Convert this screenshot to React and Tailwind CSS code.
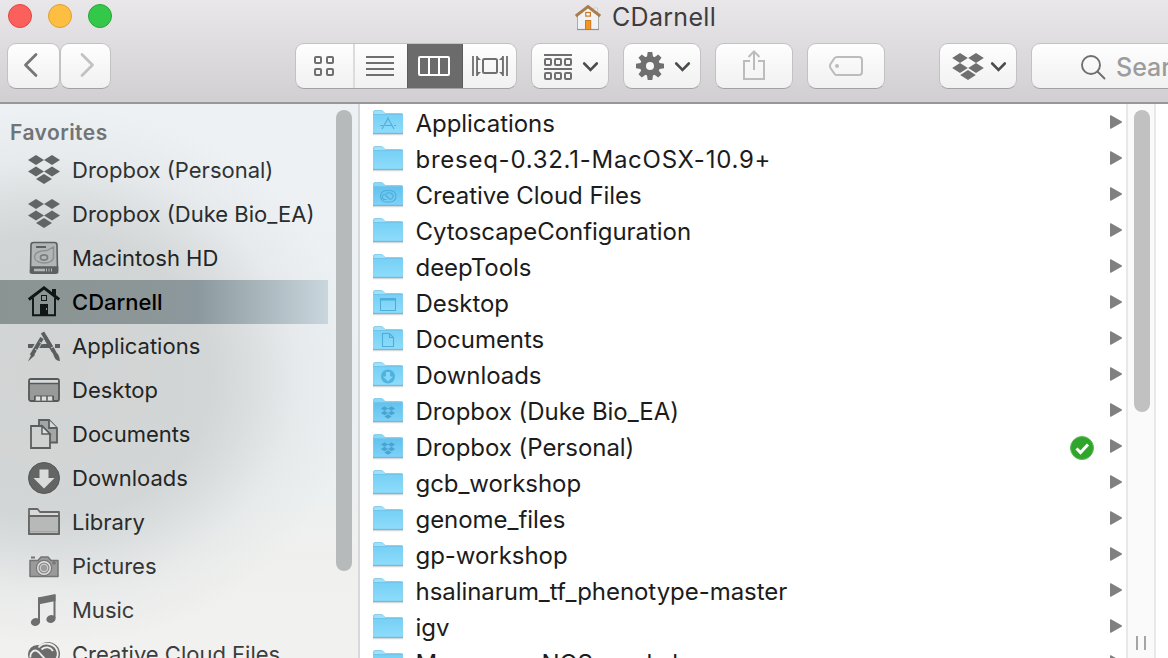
import React from "react";

const box =
  "h-[46px] shrink-0 rounded-[9px] border border-[#c3c1c4] border-b-[#a3a1a4] bg-gradient-to-b from-[#fefefe] to-[#f1f1f1] overflow-hidden";

const Diamonds = ({ pts, w = 8, h = 5 }) =>
  pts.map(([x, y], i) => (
    <path key={i} d={`M${x - w} ${y}L${x} ${y - h}L${x + w} ${y}L${x} ${y + h}Z`} />
  ));

const Chevron = () => (
  <path d="M52.200 19.500l6.300 6.300l6.300-6.300" fill="none" stroke="#4c4c4c" strokeWidth="2.600" strokeLinecap="round" />
);

function ToolButton({ width = "w-[78px]", margin = "ml-[14px]", children }) {
  return (
    <button className={`${box} ${width} ${margin} block`}>
      <svg width="76" height="44" className="block">{children}</svg>
    </button>
  );
}

function HomeEmblem() {
  return (
    <svg width="28" height="30" className="shrink-0">
      <path d="M18.500 6h4v7l-4-3z" fill="#eee" stroke="#c8c8c8" strokeWidth=".8" />
      <path d="M2.500 13L13 4.500l10.500 8.500v14.500H2.500z" fill="#f1f2f3" stroke="#a9abad" strokeWidth="1" />
      <path d="M2 27.500h22" stroke="#8f9092" strokeWidth="1.200" />
      <path d="M.8 14L13 4.500l12.200 9.500" fill="none" stroke="#a87d4b" strokeWidth="2.900" />
      <rect x="10.800" y="10.500" width="4.600" height="3.600" fill="#fff" stroke="#c8792c" strokeWidth="1.200" />
      <rect x="10.500" y="18.500" width="5.200" height="9" fill="#f79420" stroke="#c97a25" />
    </svg>
  );
}

function Toolbar() {
  const g = "#6f6f6f";
  return (
    <header className="h-[104px] shrink-0 border-b-2 border-[#99979a] bg-gradient-to-b from-[#e9e7ea] to-[#d1cfd2] overflow-hidden">
      <div className="grid h-[34px] w-[1168px] grid-cols-[575px_1fr]">
        <div className="flex items-center gap-4 pl-2 pb-0.5">
          <i className="h-6 w-6 rounded-full border border-[#e24640] bg-[#fc605c]" />
          <i className="h-6 w-6 rounded-full border border-[#dfa033] bg-[#fdbe41]" />
          <i className="h-6 w-6 rounded-full border border-[#27a53a] bg-[#34c84a]" />
        </div>
        <div className="flex items-center">
          <HomeEmblem />
          <h1 className="ml-[9px] text-[25px] leading-[34px] font-normal tracking-[0.3px] text-[#3e3c3f]">CDarnell</h1>
        </div>
      </div>
      <div className="flex w-[1240px] pt-[9px] pl-[7px]">
        <ToolButton width="w-[53px]" margin="ml-0">
          <path d="M28 10.500L17.500 21L28 31.500" fill="none" stroke="#767676" strokeWidth="2.800" strokeLinecap="round" strokeLinejoin="round" />
        </ToolButton>
        <ToolButton width="w-[51px]" margin="ml-0">
          <path d="M21 10.500L31.500 21L21 31.500" fill="none" stroke="#c2c2c2" strokeWidth="2.800" strokeLinecap="round" strokeLinejoin="round" />
        </ToolButton>
        <div className={`${box} ml-[184px] flex w-[222px]`}>
          <button className="w-[59px] border-r-2 border-[#dcdcdc]">
            <svg width="57" height="44" fill="none" stroke={g} strokeWidth="2">
              {[[19, 13], [31, 13], [19, 25], [31, 25]].map(([x, y]) => (
                <rect key={`${x}-${y}`} x={x} y={y} width="6" height="6" rx="1" />
              ))}
            </svg>
          </button>
          <button className="w-[52px]">
            <svg width="52" height="44" fill={g}>
              {[12, 18, 24, 30].map((y) => <rect key={y} x="11" y={y} width="28" height="2" />)}
            </svg>
          </button>
          <button className="w-[56px] bg-[#6b6b6b] border-x border-[#5c5c5c]">
            <svg width="54" height="44" fill="none" stroke="#fff" strokeWidth="2">
              <rect x="11" y="13" width="30" height="18" rx="1" />
              <path d="M21 13v18M31 13v18" />
            </svg>
          </button>
          <button className="w-[53px]">
            <svg width="53" height="44" fill="none" stroke={g} strokeWidth="2">
              <rect x="20" y="15" width="14" height="14" rx="1.500" />
              <path d="M10 12v20M14 12v20M40 12v20M44 12v20" strokeWidth="1.800" />
              <path d="M14 12l4 4h-3v12h3l-4 4zM40 12l-4 4h3v12h-3l4 4z" fill={g} stroke="none" />
            </svg>
          </button>
        </div>
        <ToolButton>
          <g fill="none" stroke={g} strokeWidth="2">
            <path d="M12 11h28M12 25h28" />
            {[13, 23, 33].map((x) => (
              <g key={x}>
                <rect x={x} y="15" width="6" height="6" rx="1" />
                <rect x={x} y="29" width="6" height="6" rx="1" />
              </g>
            ))}
          </g>
          <Chevron />
        </ToolButton>
        <ToolButton>
          <g transform="translate(26 22)">
            <circle r="7" fill="none" stroke={g} strokeWidth="6" />
            {[0, 45, 90, 135, 180, 225, 270, 315].map((a) => (
              <path key={a} transform={`rotate(${a})`} d="M-3.200 -8L-2.300 -14H2.300L3.200 -8z" fill={g} />
            ))}
          </g>
          <Chevron />
        </ToolButton>
        <ToolButton>
          <path d="M34 17h-6v18h20V17h-6M38 26V8M32.500 13L38 7.500L43.500 13" fill="none" stroke="#bcbcbc" strokeWidth="2" />
        </ToolButton>
        <ToolButton>
          <path d="M29 13H51q3 0 3 3V28q0 3-3 3H29q-1.500 0-2.500-1.200L22.500 24q-1.200-2 0-4L26.500 14.200Q27.500 13 29 13z" fill="none" stroke="#bcbcbc" strokeWidth="2" />
          <circle cx="29" cy="22" r="2" fill="#bcbcbc" />
        </ToolButton>
        <ToolButton margin="ml-[54px]">
          <g fill={g}><Diamonds w={7.800} h={5} pts={[[20, 14], [36, 14], [20, 24], [36, 24], [28, 31]]} /></g>
          <Chevron />
        </ToolButton>
        <div className={`${box} ml-[14px] flex w-[190px] items-center pl-[48px]`}>
          <svg width="28" height="44" className="shrink-0" fill="none" stroke="#6f6f6f" strokeWidth="1.900">
            <circle cx="11" cy="21" r="9" /><path d="M17.500 27.500l7 7" strokeLinecap="round" />
          </svg>
          <span className="ml-[8px] pt-[3px] text-[25px] font-medium text-[#9c9c9c]">Search</span>
        </div>
      </div>
    </header>
  );
}

const boxPts = [[10, 12], [26, 12], [10, 23.500], [26, 23.500], [18, 31]];

const sideIcons = {
  dropbox: <g fill="#626566"><Diamonds pts={boxPts} /></g>,
  disk: (
    <g fill="none" stroke="#5d6060" strokeWidth="1.600">
      <path d="M7.500 6.500h21q2.500 0 2.500 2.500l.500 25.500q0 2.700-2 2.700h-23q-2 0-2-2.700L5 9Q5 6.500 7.500 6.500z" fill="#b3b6b6" />
      <path d="M5 31h26.500v5.500h-27z" fill="#5d6060" />
      <path d="M8 34h11" stroke="#b3b6b6" strokeWidth="2.600" />
      <path d="M20.500 32.500v3M23 32.500v3M25.500 32.500v3" stroke="#b3b6b6" strokeWidth="1" />
      <path d="M10 11h10" strokeWidth="2" />
      <path d="M27.500 11v10c0 8-18 8-19 .500C8.500 15 17 14.500 21 14.500Z" stroke="#8d9090" strokeWidth="1.400" />
      <ellipse cx="18" cy="21.500" rx="3.600" ry="2.600" stroke="#7b7e7e" />
    </g>
  ),
  home: (
    <g fill="none" stroke="#101616">
      <path d="M7 18v17.200h22V18" strokeWidth="1.900" />
      <path d="M2.800 19.500L18 7.800L33.200 19.500" strokeWidth="3" />
      <path d="M26 9h4v8l-4-3z" fill="#101616" stroke="none" />
      <rect x="15.500" y="15.500" width="5" height="5" strokeWidth="1" />
      <rect x="14" y="24" width="8" height="12" fill="#101616" stroke="none" />
      <path d="M20.500 28v2" stroke="#8d9594" strokeWidth="1" />
    </g>
  ),
  apps: (
    <g fill="none" stroke="#5b5e5e">
      <path d="M2 22h7M13 22h12M29 22h5" strokeWidth="4" />
      <path d="M17 9.500l12 20" strokeWidth="3.800" />
      <path d="M19 8.500L5.500 31" stroke="#d1d4d4" strokeWidth="6" />
      <path d="M16 14L5.500 31.500" strokeWidth="4" />
      <path d="M6 29L2 37.500L9 31z" fill="#5b5e5e" stroke="none" />
      <path d="M16.500 8.500l11 18.500" strokeWidth="3.800" />
      <path d="M13.500 18l3 2M9 25l3 2M25 24l4-2" stroke="#d1d4d4" strokeWidth=".9" />
      <path d="M27 28q6-1 7 9q-6 0-7-9z" fill="#5b5e5e" stroke="none" />
    </g>
  ),
  desktop: (
    <g stroke="#555858" strokeWidth="1.800">
      <rect x="3" y="11" width="30" height="22" rx="2" fill="#989a9a" />
      <path d="M4 12h28v3H4z" fill="#d7dada" stroke="none" />
      <path d="M3 15.500h30" strokeWidth="1.500" />
      <path d="M8.500 33v-5h19v5" fill="#777a7a" strokeWidth="1" />
      <path d="M10 28.500h4v4h-4zM16 28.500h4v4h-4zM22 28.500h4v4h-4z" fill="#dee0e0" stroke="none" />
    </g>
  ),
  docs: (
    <g stroke="#5b5e5e" strokeWidth="1.800" fill="#a4a6a6">
      <path d="M13 8h10L31 16V30.500H13z" />
      <path d="M23 8v8H31" fill="#d8dada" />
      <path d="M5 14h11L24 22V36H5z" fill="#cfd1d0" />
      <path d="M16 14l8 8h-8z" fill="#dfe1e1" strokeWidth="1.500" />
    </g>
  ),
  downloads: (
    <g>
      <circle cx="18" cy="22" r="15.500" fill="#636565" stroke="#565858" />
      <path d="M13.500 13.500h9V22H28.500L18 32.500L7.500 22h6z" fill="#dadcdb" />
    </g>
  ),
  library: (
    <g stroke="#666766" strokeWidth="1.800" strokeLinejoin="round">
      <path d="M3 34V9h8.500l2.500 3h19v22z" fill="#d9dad9" />
      <path d="M3 16h30v18H3z" fill="#b7b9b8" />
      <path d="M4 31.500h28" stroke="#a3a5a4" strokeWidth="1" />
    </g>
  ),
  camera: (
    <g stroke="#737473" strokeWidth="1.500">
      <path d="M5 13.500h4" strokeWidth="2" />
      <path d="M4 16.500h8l3-3.500h7l3 3.500h7v16H4z" fill="#999a99" strokeLinejoin="round" />
      <circle cx="18" cy="24" r="7.500" fill="#777877" stroke="#777877" />
      <circle cx="18" cy="24" r="6.300" fill="#8d8e8d" stroke="#e3e4e2" strokeWidth="1.400" />
      <circle cx="18" cy="24" r="3.800" fill="#9b9c9b" stroke="#d5d6d4" strokeWidth="1" />
      <circle cx="28" cy="19" r="1" fill="#ddd" />
    </g>
  ),
  music: (
    <g fill="#6d6e6d">
      <path d="M12 9.500L29.500 6v7L12 16.500z" />
      <path d="M12 9.500h2V33h-2zM27.500 7h2v23h-2z" />
      <ellipse cx="9.500" cy="34" rx="4.700" ry="3.800" transform="rotate(-15 9.500 34)" />
      <ellipse cx="25" cy="31" rx="4.700" ry="3.800" transform="rotate(-15 25 31)" />
    </g>
  ),
  cloud: (
    <g fill="none" stroke="#6b6c6b">
      <circle cx="11.500" cy="22.500" r="9.500" fill="#6b6c6b" stroke="none" />
      <circle cx="22" cy="22" r="12" fill="#6b6c6b" stroke="none" />
      <path d="M12.500 15.500C17 10 27 10.500 30.500 17c3 6 0 12-5 13.500M21 29L12.500 20c-4-4-9 1-8 5.500M15.500 17.500c4-3.500 9-2.500 11.500 1.500" stroke="#eeefee" strokeWidth="1.800" />
    </g>
  ),
};

const sidebar = [
  ["dropbox", "Dropbox (Personal)", "text-[#303334]"],
  ["dropbox", "Dropbox (Duke Bio_EA)", "text-[#292c2d]"],
  ["disk", "Macintosh HD", "text-[#222525]"],
  ["home", "CDarnell", "text-black"],
  ["apps", "Applications", "text-[#222525]"],
  ["desktop", "Desktop", "text-[#222525]"],
  ["docs", "Documents", "text-[#222525]"],
  ["downloads", "Downloads", "text-[#252727]"],
  ["library", "Library", "text-[#2b2c2c]"],
  ["camera", "Pictures", "text-[#333434]"],
  ["music", "Music", "text-[#3a3b3b]"],
  ["cloud", "Creative Cloud Files", "text-[#3c3d3d]"],
];

function Sidebar() {
  return (
    <aside className="flex w-[360px] shrink-0 border-r-2 border-[#d6d9dc] bg-[radial-gradient(ellipse_310px_270px_at_50px_272px,#d1d4d3_0%,#d3d6d6_52%,rgba(216,219,220,0.88)_64%,rgba(226,229,230,0.55)_80%,rgba(237,241,243,0)_100%),linear-gradient(180deg,#edf1f4_0%,#ebf0f3_55%,#f0f0ee_85%,#f1f1ef_100%)]">
      <nav className="w-[328px] shrink-0">
        <h2 className="h-[44px] pl-[10px] pt-[13px] text-[21px] leading-[32px] font-semibold tracking-[0.45px] text-[#717476]">Favorites</h2>
        <ul>
          {sidebar.map(([icon, label, color], i) => (
            <li
              key={i}
              className={`flex h-[44px] items-center pl-[26px] ${color} ${
                icon === "home"
                  ? "bg-[linear-gradient(90deg,#8a9492_0%,#8c9697_40%,#8b989d_60%,#c9d6dd_100%)] font-medium"
                  : "font-normal"
              }`}
            >
              <svg width="36" height="44" className="shrink-0">{sideIcons[icon]}</svg>
              <span className="ml-[10px] text-[22px] leading-[44px] whitespace-pre">{label}</span>
            </li>
          ))}
        </ul>
      </nav>
      <div className="mt-[6px] ml-2 h-[461px] w-4 shrink-0 rounded-full bg-[#b7babb]" />
    </aside>
  );
}

const glyphs = {
  apps: <path d="M7 15.500h3M12 15.500h7M21 15.500h2M15.500 7.500L9 19M14.500 7.500L21 19" />,
  cloud: (
    <g>
      <rect x="7.500" y="8.500" width="15.500" height="11.500" rx="5.700" />
      <path d="M17 17.500L12.500 13c-3-2-4.500 3-1.500 4.500h2.500M13 12c3-3 8 0 7 3.500c-1 2-3 2-4.500 1" />
    </g>
  ),
  desktop: <g><path d="M7.500 8.500h15v12h-15z" /><path d="M7.500 9.500h15" strokeWidth="2" /></g>,
  doc: <path d="M9.500 7.500h7l4 4v9h-11zM16.500 7.500v4h4" />,
  down: (
    <g stroke="none">
      <circle cx="15" cy="14.500" r="7" fill="#4fb3e0" />
      <path d="M13 10h4V14.500h3l-5 5l-5-5h3z" fill="#86d7f8" />
    </g>
  ),
  box: <g fill="#4aa3d0" stroke="none"><Diamonds w={3.600} h={2.200} pts={[[11.500, 10.500], [18.500, 10.500], [11.500, 15], [18.500, 15], [15, 18.500]]} /></g>,
};

function Folder({ glyph }) {
  const deep = glyph === "box" || glyph === "cloud";
  return (
    <svg width="30" height="28" className="shrink-0">
      <defs>
        <linearGradient id={deep ? "fd" : "fl"} x1="0" y1="0" x2="0" y2="1">
          <stop offset="0" stopColor={deep ? "#62c2ef" : "#76d0f6"} />
          <stop offset="1" stopColor={deep ? "#7dd2f7" : "#8edcfa"} />
        </linearGradient>
      </defs>
      <path d="M0 24.500h30" stroke="#d5d9dc" strokeWidth="1.500" />
      <path d="M.5 23V2q0-1.500 1.500-1.500h6.500q1 0 2 1.200l1.500 1.800H28.500q1 0 1 1V23z" fill={deep ? "#88d6f8" : "#9fe0fb"} stroke="#8bcfeb" />
      <path d="M.5 4.500h29V23H.5z" fill={deep ? "url(#fd)" : "url(#fl)"} />
      <path d="M0 4.500h30" stroke="#72c6ea" />
      <path d="M0 23.400h30" stroke="#6bb9dc" strokeWidth="1.100" />
      <g fill="none" stroke="#4fadd9" strokeWidth="1.100">{glyphs[glyph]}</g>
    </svg>
  );
}

const files = [
  ["Applications", "apps"],
  ["breseq-0.32.1-MacOSX-10.9+"],
  ["Creative Cloud Files", "cloud"],
  ["CytoscapeConfiguration"],
  ["deepTools"],
  ["Desktop", "desktop"],
  ["Documents", "doc"],
  ["Downloads", "down"],
  ["Dropbox (Duke Bio_EA)", "box"],
  ["Dropbox (Personal)", "box", true],
  ["gcb_workshop"],
  ["genome_files"],
  ["gp-workshop"],
  ["hsalinarum_tf_phenotype-master"],
  ["igv"],
  ["Macrogen_NGS_workshop"],
];

export default function App() {
  return (
    <div className="flex h-[658px] w-[1168px] flex-col overflow-hidden bg-white font-['Inter','Liberation_Sans',sans-serif]">
      <Toolbar />
      <div className="flex h-[554px] overflow-hidden">
        <Sidebar />
        <ul className="w-[766px] shrink-0 pt-[2px]">
          {files.map(([name, glyph, synced]) => (
            <li key={name} className="flex h-[36px] items-center pl-[13px] pr-1">
              <Folder glyph={glyph} />
              <span
                className={`ml-[12.5px] text-[24px] leading-[36px] font-normal whitespace-pre text-[#1c1c1c] ${
                  name.startsWith("breseq") ? "tracking-[0.74px]" : "tracking-[-0.05px]"
                }`}
              >
                {name}
              </span>
              <span className="ml-auto flex items-center gap-4">
                {synced && (
                  <svg width="24" height="24">
                    <circle cx="12" cy="12" r="11.500" fill="#2fa62b" stroke="#5fb85b" />
                    <path d="M6.500 12.500l4 4l7.500-8" fill="none" stroke="#fff" strokeWidth="3" />
                  </svg>
                )}
                <svg width="12" height="36"><path d="M0 10q0-1 1-.7L11.500 15.200q1 .800 0 1.600L1 22.700q-1 .3-1-.7z" fill="#808080" /></svg>
              </span>
            </li>
          ))}
        </ul>
        <div className="flex w-[30px] shrink-0 flex-col items-center justify-between border-x-2 border-[#e8e8e8] bg-[#fafafa] pt-[6px] pb-2">
          <div className="ml-[2px] h-[302px] w-4 rounded-full bg-[#c1c1c1]" />
          <div className="h-[14px] w-[10px] border-x-2 border-[#a5a5a5]" />
        </div>
      </div>
    </div>
  );
}
